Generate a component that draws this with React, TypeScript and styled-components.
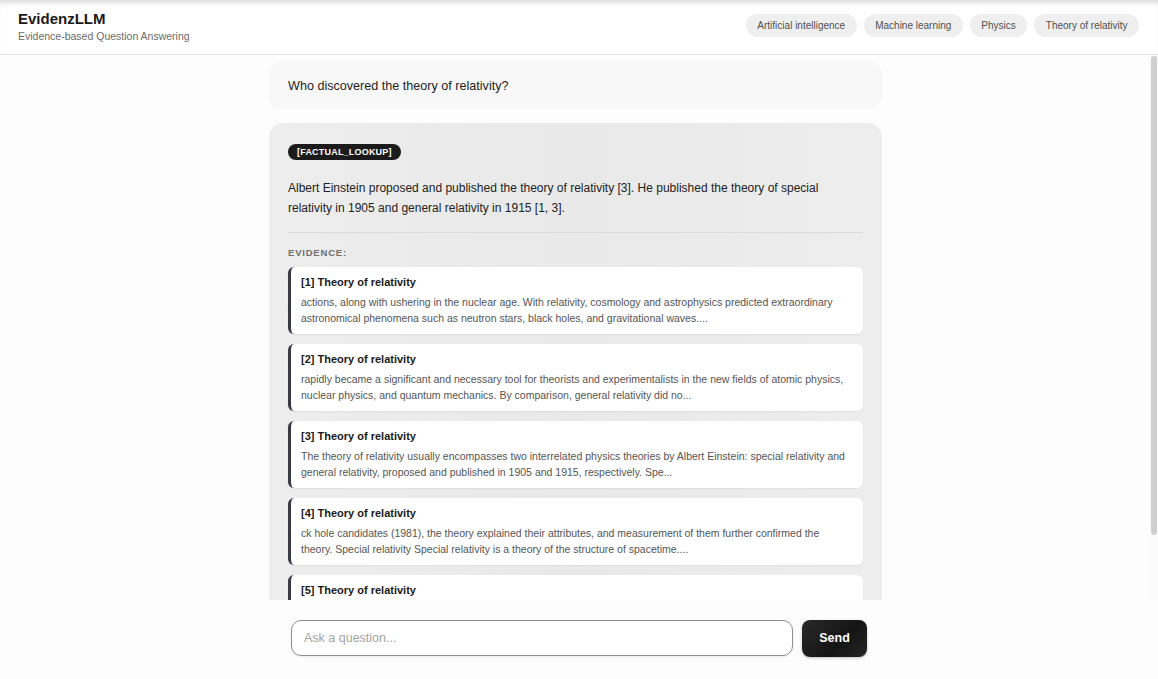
import styled, { createGlobalStyle } from 'styled-components';

const GlobalStyle = createGlobalStyle`
  html, body {
    margin: 0;
    padding: 0;
    height: 100%;
    background: #fdfdfd;
    font-family: "Liberation Sans", Arial, sans-serif;
    color: #1c1c1c;
  }
  #root {
    height: 100%;
  }
`;

const Page = styled.div`
  height: 679px;
  display: flex;
  flex-direction: column;
  background: #fdfdfd;
`;

const Header = styled.header`
  height: 54px;
  flex-shrink: 0;
  display: flex;
  align-items: center;
  justify-content: space-between;
  padding: 0 19px 0 18px;
  border-bottom: 1px solid #e4e4e4;
  background: #fff;
  box-shadow: inset 0 6px 6px -4px rgba(0, 0, 0, 0.18);
`;

const Brand = styled.div`
  display: flex;
  flex-direction: column;
  gap: 3px;
  padding-bottom: 2px;
`;

const Title = styled.h1`
  margin: 0;
  font-size: 15px;
  font-weight: 700;
  color: #1a1a1a;
`;

const Subtitle = styled.p`
  margin: 0;
  font-size: 10.5px;
  color: #6b6b6b;
`;

const Topics = styled.nav`
  display: flex;
  gap: 7px;
  padding-bottom: 4px;
`;

const Chip = styled.button`
  height: 23px;
  padding: 0 11.5px;
  border: none;
  border-radius: 12px;
  background: #efefef;
  color: #4f4f4f;
  font-family: inherit;
  font-size: 10px;
  font-weight: 500;
`;

const ScrollArea = styled.div`
  flex: 1;
  min-height: 0;
  display: flex;
`;

const Scroller = styled.main`
  flex: 1;
  overflow-y: auto;
  background: #fdfdfd;
  padding-left: 2px;
  scrollbar-width: none;

  &::-webkit-scrollbar {
    display: none;
  }
`;

const Rail = styled.div`
  width: 9px;
  flex-shrink: 0;
  background: #fbfbfb;
  padding: 1px 1px 0 2px;
  box-sizing: border-box;
`;

const Thumb = styled.div`
  height: 479px;
  border-radius: 3px;
  background: #cfcfcf;
`;

const Column = styled.div`
  width: 613px;
  margin: 0 auto;
  padding-top: 6px;
  display: flex;
  flex-direction: column;
  gap: 13px;
`;

const QuestionBubble = styled.div`
  background: #f8f8f8;
  border-radius: 14px;
  padding: 18px 19px 17px;
  font-size: 12.6px;
  color: #1d1d1d;
`;

const AnswerBubble = styled.div`
  background: linear-gradient(90deg, #ededed 0%, #e9e9e9 50%, #ededed 100%);
  border-radius: 14px;
  padding: 18px 19px 20px;
`;

const Badge = styled.span`
  display: inline-block;
  background: #1b1b1b;
  color: #fff;
  font-size: 9px;
  font-weight: 700;
  letter-spacing: 0.2px;
  padding: 3px 9px;
  border-radius: 9px;
`;

const AnswerText = styled.p`
  margin: 18px 0 0;
  font-size: 12px;
  line-height: 20px;
  color: #222;
`;

const Divider = styled.hr`
  margin: 14px 0 0;
  border: none;
  border-top: 1px solid #dcdcdc;
`;

const SectionLabel = styled.div`
  margin: 14px 0 9px;
  font-size: 9.5px;
  font-weight: 700;
  letter-spacing: 0.8px;
  color: #6e6e6e;
`;

const EvidenceList = styled.div`
  display: flex;
  flex-direction: column;
  gap: 10px;
`;

const EvidenceCard = styled.div`
  background: #fff;
  border-left: 3px solid #3a3a44;
  border-radius: 6px;
  padding: 7px 13px 8px 10px;
  box-shadow: 0 1px 2px rgba(0, 0, 0, 0.06);
`;

const EvidenceTitle = styled.div`
  font-size: 11px;
  font-weight: 700;
  color: #1a1a1a;
  line-height: 16px;
`;

const EvidenceBody = styled.p`
  margin: 4px 0 0;
  font-size: 10.5px;
  line-height: 16px;
  color: #555;
`;

const Composer = styled.form`
  height: 79px;
  flex-shrink: 0;
  display: flex;
  align-items: center;
  justify-content: center;
  gap: 9px;
  background: #fdfdfd;
  padding: 0 0 3px;
  box-sizing: border-box;
`;

const Input = styled.input`
  width: 502px;
  height: 36px;
  box-sizing: border-box;
  border: 1px solid #8f8f8f;
  border-radius: 10px;
  padding: 0 12px;
  font-family: inherit;
  font-size: 12.5px;
  background: #fff;
  box-shadow: 0 1px 2px rgba(0, 0, 0, 0.08);

  &::placeholder {
    color: #a3a3a3;
  }
`;

const SendButton = styled.button`
  width: 65px;
  height: 37px;
  border: none;
  border-radius: 8px;
  background: linear-gradient(135deg, #2a2a2a 0%, #141414 60%, #262626 100%);
  color: #fff;
  font-family: inherit;
  font-size: 12.5px;
  font-weight: 700;
  box-shadow: 0 1px 3px rgba(0, 0, 0, 0.25);
`;

const topics = ['Artificial intelligence', 'Machine learning', 'Physics', 'Theory of relativity'];

const evidence = [
  {
    id: 1,
    text: 'actions, along with ushering in the nuclear age. With relativity, cosmology and astrophysics predicted extraordinary astronomical phenomena such as neutron stars, black holes, and gravitational waves....',
  },
  {
    id: 2,
    text: 'rapidly became a significant and necessary tool for theorists and experimentalists in the new fields of atomic physics, nuclear physics, and quantum mechanics. By comparison, general relativity did no...',
  },
  {
    id: 3,
    text: 'The theory of relativity usually encompasses two interrelated physics theories by Albert Einstein: special relativity and general relativity, proposed and published in 1905 and 1915, respectively. Spe...',
  },
  {
    id: 4,
    text: 'ck hole candidates (1981), the theory explained their attributes, and measurement of them further confirmed the theory. Special relativity Special relativity is a theory of the structure of spacetime....',
  },
  {
    id: 5,
    text: 'Special relativity is based on two postulates which are contradictory in classical mechanics: the laws of physics are the same for all observers in any inertial frame of reference...',
  },
];

const App = () => {
  return (
    <>
      <GlobalStyle />
      <Page>
        <Header>
          <Brand>
            <Title>EvidenzLLM</Title>
            <Subtitle>Evidence-based Question Answering</Subtitle>
          </Brand>
          <Topics>
            {topics.map((t) => (
              <Chip key={t} type="button">
                {t}
              </Chip>
            ))}
          </Topics>
        </Header>

        <ScrollArea>
          <Scroller>
            <Column>
              <QuestionBubble>Who discovered the theory of relativity?</QuestionBubble>
              <AnswerBubble>
                <Badge>[FACTUAL_LOOKUP]</Badge>
                <AnswerText>
                  Albert Einstein proposed and published the theory of relativity [3]. He published the theory of
                  special relativity in 1905 and general relativity in 1915 [1, 3].
                </AnswerText>
                <Divider />
                <SectionLabel>EVIDENCE:</SectionLabel>
                <EvidenceList>
                  {evidence.map((e) => (
                    <EvidenceCard key={e.id}>
                      <EvidenceTitle>[{e.id}] Theory of relativity</EvidenceTitle>
                      <EvidenceBody>{e.text}</EvidenceBody>
                    </EvidenceCard>
                  ))}
                </EvidenceList>
              </AnswerBubble>
            </Column>
          </Scroller>
          <Rail>
            <Thumb />
          </Rail>
        </ScrollArea>

        <Composer onSubmit={(e) => e.preventDefault()}>
          <Input placeholder="Ask a question..." />
          <SendButton type="submit">Send</SendButton>
        </Composer>
      </Page>
    </>
  );
};

export default App;
